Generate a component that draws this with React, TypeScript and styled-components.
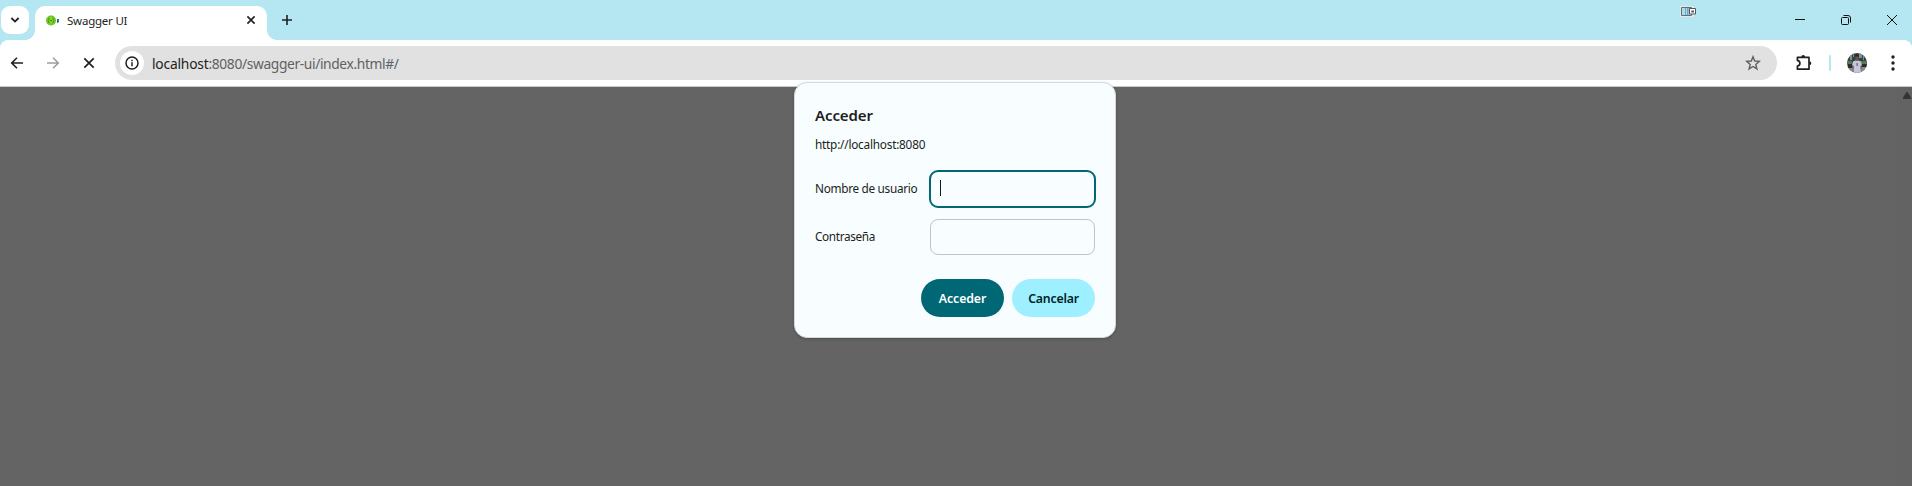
import React from 'react';
import styled, { createGlobalStyle } from 'styled-components';

const Global = createGlobalStyle`
  *, *::before, *::after { box-sizing: border-box; }
  html, body { margin: 0; height: 100%; overflow: hidden; }
  body { background: #646464; font-family: "Noto Sans", "Open Sans", sans-serif; color: #1c1e20; }
  button { font: inherit; border: 0; padding: 0; margin: 0; color: inherit; }
  svg { display: block; }
`;

const Browser = styled.div`
  position: relative;
  width: 1912px;
  height: 486px;
  display: flex;
  flex-direction: column;
  overflow: hidden;
`;

const TitleBar = styled.header`
  height: 40px;
  flex: none;
  display: flex;
  align-items: flex-start;
  padding: 6px 0 0 1px;
  background: #b4e7f2;
`;

const TabSearch = styled.button`
  width: 28px;
  height: 28px;
  border-radius: 9px;
  background: #fff;
  display: grid;
  place-items: center;
`;

const Tab = styled.div`
  position: relative;
  width: 232px;
  height: 34px;
  margin-left: 6px;
  padding: 0 11px 6px;
  border-radius: 10px 10px 0 0;
  background: #fff;
  display: flex;
  align-items: center;
  &::before, &::after {
    content: "";
    position: absolute;
    bottom: 0;
    width: 10px;
    height: 10px;
  }
  &::before { left: -10px; background: radial-gradient(circle at 0 0, transparent 9.6px, #fff 10.2px); }
  &::after { right: -10px; background: radial-gradient(circle at 100% 0, transparent 9.6px, #fff 10.2px); }
`;

const Text = styled.span<{ $size: number; $spacing?: number; $weight?: number; $line?: number }>`
  font-size: ${p => p.$size}px;
  letter-spacing: ${p => p.$spacing ?? 0}px;
  font-weight: ${p => p.$weight ?? 400};
  line-height: ${p => p.$line ?? 16}px;
  white-space: nowrap;
`;

const TabTitle = styled(Text)`
  margin-left: 8px;
  padding-top: 1px;
  flex: 1;
`;

const NewTab = styled.button`
  width: 28px;
  height: 28px;
  margin-left: 6px;
  background: none;
  display: grid;
  place-items: center;
`;

const TitleSpacer = styled.div`
  flex: 1;
`;

const Indicator = styled.div`
  width: 16px;
  margin-right: 98px;
`;

const WindowControls = styled.div`
  display: flex;
  gap: 34px;
  padding: 8px 14px 0 0;
`;

const Toolbar = styled.div`
  height: 47px;
  flex: none;
  display: flex;
  align-items: center;
  padding: 0 7px 1px 5px;
  background: #fff;
  border-bottom: 1px solid #c9c9c9;
`;

const NavButtons = styled.div`
  display: flex;
  gap: 12px;
  margin-right: 14px;
`;

const IconButton = styled.button<{ $muted?: boolean }>`
  width: 24px;
  height: 24px;
  background: none;
  color: ${p => (p.$muted ? '#9d9d9d' : '#1f2022')};
  display: grid;
  place-items: center;
`;

const AddressBar = styled.div`
  width: 1662px;
  height: 34px;
  border-radius: 17px;
  background: #e1e1e1;
  padding: 0 12px 0 5px;
  display: flex;
  align-items: center;
`;

const SiteInfo = styled.span`
  width: 24px;
  height: 24px;
  border-radius: 50%;
  background: #fff;
  display: grid;
  place-items: center;
  margin-right: 8px;
`;

const Url = styled(Text)`
  flex: 1;
  padding-top: 2px;
  color: #606264;
  b { font-weight: 400; letter-spacing: -0.2px; color: #1c1e20; }
`;

const Divider = styled.i`
  width: 2px;
  height: 16px;
  border-radius: 1px;
  background: #b4e7f2;
  margin: 0 16px 0 13px;
`;

const ExtensionButton = styled(IconButton)`
  margin-left: 15px;
`;

const MenuButton = styled(IconButton)`
  margin-left: 14px;
`;

const Page = styled.main`
  flex: 1;
  background: #646464;
  display: flex;
  justify-content: flex-end;
`;

const ScrollTrack = styled.div`
  width: 15px;
  background: #636363;
  padding: 5px 0 0 6px;
`;

const ToolbarCorner = styled.i<{ $right?: boolean }>`
  position: absolute;
  top: 40px;
  ${p => (p.$right ? 'right: 0;' : 'left: 0;')}
  width: 8px;
  height: 8px;
  background: radial-gradient(circle at ${p => (p.$right ? '0' : '100%')} 100%, transparent 7.6px, #b4e7f2 8.2px);
`;

const Dialog = styled.form`
  position: absolute;
  left: 794px;
  top: 82px;
  width: 322px;
  height: 256px;
  border: 1px solid #d3dadc;
  border-radius: 13px;
  background: #f8fdff;
  padding: 22px 20px 19px;
  display: flex;
  flex-direction: column;
  box-shadow: 0 1px 3px rgba(0, 0, 0, 0.22);
`;

const Origin = styled(Text)`
  margin: 11px 0 18px;
`;

const Field = styled.label`
  display: flex;
  align-items: center;
  justify-content: space-between;
  height: 38px;
  margin-bottom: 10px;
`;

const FieldName = styled(Text)`
  padding-bottom: 2px;
`;

const Input = styled.span<{ $focused?: boolean }>`
  width: ${p => (p.$focused ? 167 : 165)}px;
  height: ${p => (p.$focused ? 38 : 36)}px;
  margin-right: ${p => (p.$focused ? -1 : 0)}px;
  border: ${p => (p.$focused ? '2px solid #006874' : '1px solid #bfc4c7')};
  border-radius: ${p => (p.$focused ? 9 : 8)}px;
  padding-left: 9px;
  display: flex;
  align-items: center;
`;

const Caret = styled.i`
  width: 1px;
  height: 16px;
  margin-top: -2px;
  background: #16191b;
`;

const Actions = styled.div`
  display: flex;
  justify-content: flex-end;
  gap: 8px;
  margin-top: 13px;
`;

const ActionButton = styled.button<{ $primary?: boolean }>`
  width: 83px;
  height: 38px;
  border-radius: 19px;
  padding-bottom: 2px;
  background: ${p => (p.$primary ? '#006874' : '#9eefff')};
  color: ${p => (p.$primary ? '#fff' : '#001f24')};
`;

export default function App() {
  return (
    <Browser>
      <Global />
      <TitleBar>
        <TabSearch type="button">
          <svg width="10" height="6" viewBox="0 0 10 6" fill="none" stroke="#1f2022" strokeWidth="1.8"><path d="M1.4 1 5 4.6 8.6 1" /></svg>
        </TabSearch>
        <Tab>
          <svg width="13" height="11" viewBox="0 0 13 11">
            <circle cx="5" cy="5.5" r="4.9" fill="#5fae1f" />
            <circle cx="5" cy="5.5" r="4.2" fill="#7edb1c" />
            <path d="M3.5 3Q2.5 3 2.7 4.5L2 5.5l.7 1q-.2 1.6.8 1.6M6.5 3q1 0 .8 1.5l.7 1-.7 1q.2 1.6-.8 1.6M4 5.5h2" stroke="#2c7a27" fill="none" strokeWidth=".9" />
            <path d="M11 4h1.9v3.2L11 8z" fill="#176a80" />
          </svg>
          <TabTitle $size={11.5} $spacing={-0.22}>Swagger UI</TabTitle>
          <svg width="10" height="10" viewBox="0 0 10 10" stroke="#1f2022" strokeWidth="1.6"><path d="m1.4 1.4 7.2 7.2m0-7.2L1.4 8.6" /></svg>
        </Tab>
        <NewTab type="button">
          <svg width="10" height="10" viewBox="0 0 10 10" stroke="#1f2022" strokeWidth="1.6"><path d="M5 0v10M0 5h10" /></svg>
        </NewTab>
        <TitleSpacer />
        <Indicator>
          <svg width="16" height="11" viewBox="0 0 16 11">
            <path d="M.5.5h13v10H.5z" fill="#f5e9e3" stroke="#f1e4df" />
            <path d="M1.5 1.5h10v8h-10z" fill="#a8dfec" stroke="#5a7280" />
            <path d="M5 2h1v7H5zM7 2h1.5v7H7z" fill="#7aa4b2" />
            <path d="M9.5 2.5h6v5.5h-6z" fill="#fff" stroke="#4e5566" />
            <path d="M11.3 4.5H14v2h-2.7z" fill="#4e5566" />
          </svg>
        </Indicator>
        <WindowControls>
          <svg width="12" height="12" viewBox="0 0 12 12" stroke="#111" fill="none"><path d="M1 5.5h10" /></svg>
          <svg width="12" height="12" viewBox="0 0 12 12" stroke="#111" fill="none"><rect x="1.5" y="3.5" width="7" height="7" rx="1" /><path d="M3.5 1.5H8q2.5 0 2.5 2.5v4.5" /></svg>
          <svg width="12" height="12" viewBox="0 0 12 12" stroke="#111" fill="none"><path d="m1 1 10 10M11 1 1 11" /></svg>
        </WindowControls>
      </TitleBar>
      <Toolbar>
        <NavButtons>
          <IconButton type="button"><svg width="14" height="14" viewBox="0 0 14 14" fill="none" stroke="currentColor" strokeWidth="1.6"><path d="M13 7H2M7 1.7 1.7 7 7 12.3" /></svg></IconButton>
          <IconButton type="button" $muted><svg width="14" height="14" viewBox="0 0 14 14" fill="none" stroke="currentColor" strokeWidth="1.6"><path d="M1 7h11M7 1.7 12.3 7 7 12.3" /></svg></IconButton>
          <IconButton type="button"><svg width="12" height="12" viewBox="0 0 12 12" stroke="currentColor" strokeWidth="1.7"><path d="m1.3 1.3 9.4 9.4m0-9.4-9.4 9.4" /></svg></IconButton>
        </NavButtons>
        <AddressBar>
          <SiteInfo>
            <svg width="14" height="14" viewBox="0 0 14 14" fill="none" stroke="#1f2022" strokeWidth="1.5"><circle cx="7" cy="7" r="6" /><path d="M7 6.3v4M7 3.7v1.5" /></svg>
          </SiteInfo>
          <Url $size={13.8} $spacing={-0.37} $line={20}><b>localhost</b>:8080/swagger-ui/index.html#/</Url>
          <IconButton type="button"><svg width="16" height="16" viewBox="0 0 16 16" fill="none" stroke="#5d6062" strokeWidth="1.4"><path d="m8 1.7 1.7 4.3 4.6.4-3.5 3 1.1 4.5L8 11.5l-3.9 2.4 1.1-4.5-3.5-3L6.3 6z" /></svg></IconButton>
        </AddressBar>
        <ExtensionButton type="button">
          <svg width="18" height="18" viewBox="0 0 18 18"><path d="M2.4 3.4H14v11.8H2.4v-3q2.5-.5 2.500-2.900T2.4 6.400z" fill="none" stroke="#1f2022" strokeWidth="1.7" strokeLinejoin="round" /><path d="M6.300 3a1.900 1.900 0 0 1 3.800 0zM14.400 7.300a1.900 1.900 0 0 1 0 3.800z" fill="#1f2022" /></svg>
        </ExtensionButton>
        <Divider />
        <svg width="20" height="20" viewBox="0 0 20 20">
          <defs><clipPath id="avatar"><circle cx="10" cy="10" r="10" /></clipPath></defs>
          <g clipPath="url(#avatar)">
            <path fill="#34443b" d="M0 0h20v20H0z" />
            <path fill="#7893a6" d="M3 0h2v7H3zM6 0h1v4H6zM12 0h3v5h-3zM16 3h1v4h-1z" />
            <path fill="#5f7558" d="M0 8h5v3H0zM14 8h6v3h-6z" />
            <path fill="#25302b" d="M1 11h4v4H1zM15 11h5v3h-5z" />
            <path fill="#8f8a86" d="M0 15h6v5H0zM14 14h6v6h-6z" />
            <path fill="#c3c6dc" d="m6 8.5 2.5-1h3l2.5 1 1 4-1.5.5.5 7H6.500V13L5 12.500z" />
            <path fill="#76513f" d="M5 12.500h1.300V16L5 15zM14 12.500h1.200L14.500 16H14zM8.300 3h3.200v3.500L10 8 8.300 6.500z" />
            <path fill="#282528" d="M8 3.500q0-2 2-2t2 2z" />
            <path fill="#5f6074" d="M9.500 10h1.200v3H9.500z" />
          </g>
        </svg>
        <MenuButton type="button"><svg width="4" height="16" viewBox="0 0 4 16" fill="currentColor"><circle cx="2" cy="2" r="1.7" /><circle cx="2" cy="8" r="1.7" /><circle cx="2" cy="14" r="1.7" /></svg></MenuButton>
      </Toolbar>
      <Page>
        <ScrollTrack><svg width="8" height="8" viewBox="0 0 8 8"><path d="M3.5 0h1L8 5.5V7H0V5.5z" fill="#343434" /></svg></ScrollTrack>
      </Page>
      <ToolbarCorner />
      <ToolbarCorner $right />
      <Dialog>
        <Text $size={15} $weight={600} $spacing={-0.1} $line={20}>Acceder</Text>
        <Origin $size={11.8} $spacing={-0.23}>http://localhost:8080</Origin>
        <Field><FieldName $size={11.8} $spacing={-0.31}>Nombre de usuario</FieldName><Input $focused><Caret /></Input></Field>
        <Field><FieldName $size={11.8} $spacing={-0.36}>Contraseña</FieldName><Input /></Field>
        <Actions>
          <ActionButton type="button" $primary><Text $size={12.3} $weight={600} $spacing={-0.1}>Acceder</Text></ActionButton>
          <ActionButton type="button"><Text $size={12.3} $weight={600} $spacing={-0.2}>Cancelar</Text></ActionButton>
        </Actions>
      </Dialog>
    </Browser>
  );
}
